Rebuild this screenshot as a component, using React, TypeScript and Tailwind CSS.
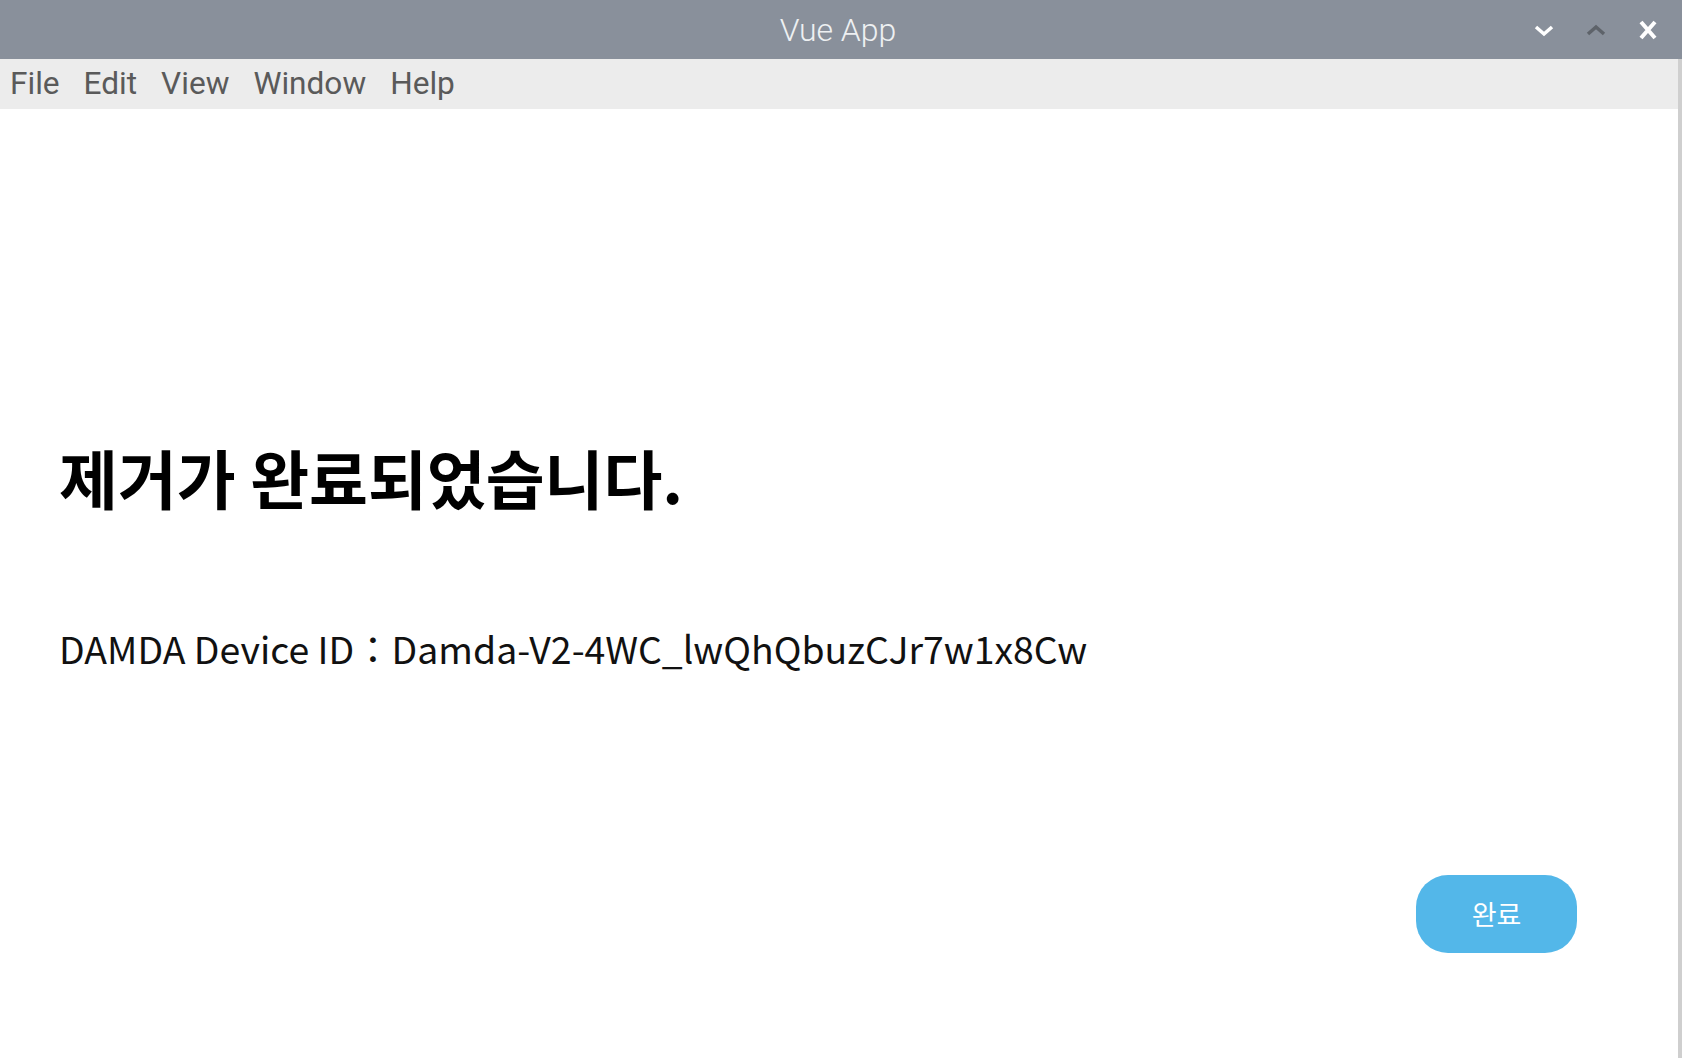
const menus = ['File', 'Edit', 'View', 'Window', 'Help'];

const TitleBar = () => (
  <div className="grid h-[59px] grid-cols-[1fr_auto_1fr] items-center bg-[#89909b]">
    <div />
    <span className="pr-[6px] font-['Roboto',sans-serif] text-[32px] font-light text-[#eef0f2]">Vue App</span>
    <div className="flex items-center justify-end gap-8 pr-[24px]">
      <svg width="20" height="20" viewBox="0 0 20 20">
        <path d="M2 7 L10 14 L18 7" fill="none" stroke="#ffffff" strokeWidth="3.5" />
      </svg>
      <svg width="20" height="20" viewBox="0 0 20 20">
        <path d="M2 14 L10 7 L18 14" fill="none" stroke="#5e636a" strokeWidth="3.5" />
      </svg>
      <svg width="20" height="20" viewBox="0 0 20 20">
        <path d="M3 2 L17 18 M17 2 L3 18" fill="none" stroke="#ffffff" strokeWidth="4" />
      </svg>
    </div>
  </div>
);

const MenuBar = () => (
  <div className="flex h-[50px] items-center gap-[24px] bg-[#ececec] pl-[10px] font-['Roboto',sans-serif] text-[31.6px] text-[#5a5a5a]">
    {menus.map(m => (
      <span key={m}>{m}</span>
    ))}
  </div>
);

export default function App() {
  return (
    <div className="flex h-screen w-full flex-col bg-white">
      <TitleBar />
      <div className="flex flex-1 flex-col border-r-4 border-[#cfcfcf]">
        <MenuBar />
        <main className="flex flex-1 flex-col pl-[59px] pr-[101px] font-['Noto_Sans_CJK_KR',sans-serif] text-[#111111]">
          <h1 className="mt-[335px] text-[64px] font-bold leading-none text-black">
            제거가 완료되었습니다.
          </h1>
          <p className="mt-[122px] text-[37.4px] leading-none">
            DAMDA Device ID：Damda-V2-4WC_lwQhQbuzCJr7w1x8Cw
          </p>
          <div className="mt-auto mb-[105px] flex justify-end">
            <button className="flex h-[78px] w-[161px] items-center justify-center rounded-[32px] bg-[#53b7e9] text-[27px] text-white">
              완료
            </button>
          </div>
        </main>
      </div>
    </div>
  );
}
